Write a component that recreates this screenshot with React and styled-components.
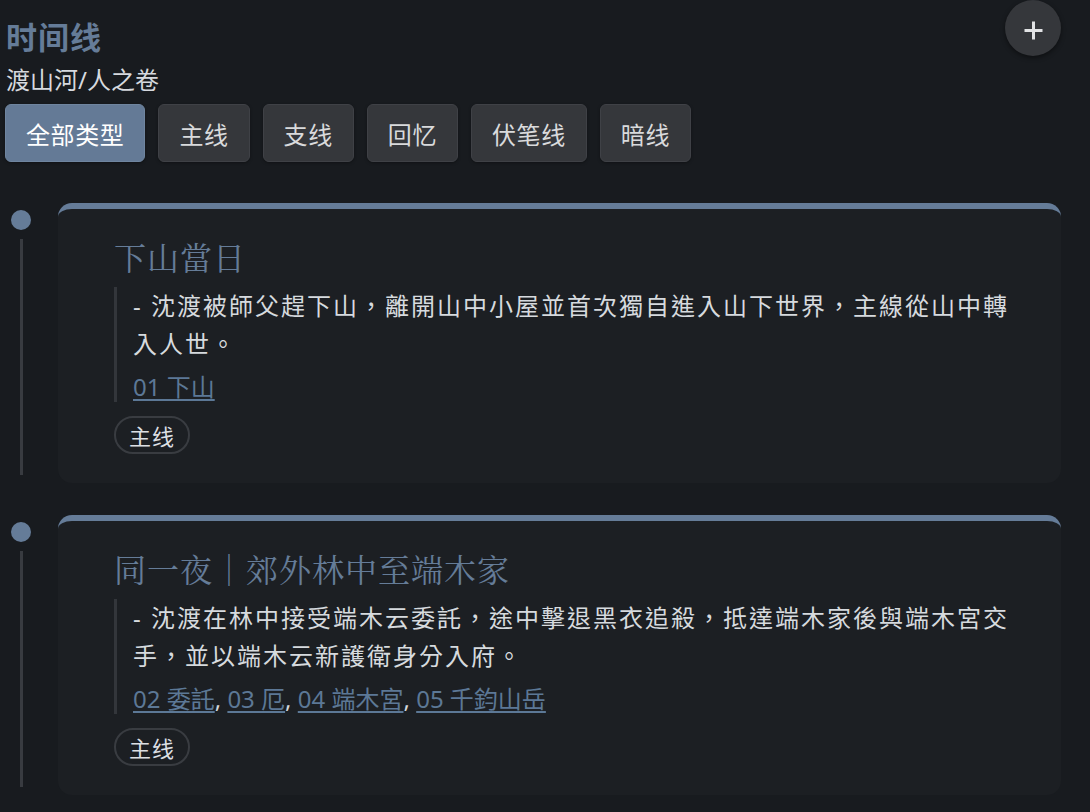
import React from "react";
import styled, { createGlobalStyle } from "styled-components";

const GlobalStyle = createGlobalStyle`
  html, body {
    margin: 0;
    padding: 0;
    background: #181b1f;
  }
  body {
    font-family: "Noto Sans", "Noto Sans CJK SC", sans-serif;
    color: #d3d7dc;
  }
  * { box-sizing: border-box; }
`;

const Page = styled.div`
  padding: 0 29px 0 5px;
  min-height: 812px;
`;

const Header = styled.header`
  display: flex;
  justify-content: space-between;
  align-items: flex-start;
`;

const TitleBlock = styled.div`
  display: flex;
  flex-direction: column;
  padding-left: 1px;
`;

const Title = styled.h1`
  margin: 16px 0 0;
  font-size: 31px;
  line-height: 40px;
  font-weight: 700;
  letter-spacing: 1px;
  color: #657c98;
  font-family: "Noto Sans CJK SC", sans-serif;
`;

const Subtitle = styled.div`
  margin-top: 8px;
  font-size: 24px;
  line-height: 32px;
  color: #d6d9de;
  font-family: "Noto Sans", "Noto Sans CJK SC", sans-serif;
`;

const FabButton = styled.button`
  width: 56px;
  height: 56px;
  border-radius: 50%;
  border: none;
  background: #35373b;
  box-shadow: 0 2px 5px rgba(0, 0, 0, 0.45);
  display: flex;
  align-items: center;
  justify-content: center;
  padding: 4px 0 0;
  cursor: pointer;
`;

const FilterRow = styled.div`
  display: flex;
  gap: 13px;
  margin-top: 8px;
`;

const FilterButton = styled.button`
  height: 58px;
  padding: 0 20px;
  border-radius: 6px;
  border: 1px solid ${(p) => (p.$active ? "#6f859f" : "#3f4146")};
  background: ${(p) => (p.$active ? "#647a96" : "#35373b")};
  color: ${(p) => (p.$active ? "#ffffff" : "#d9dadc")};
  font-family: "Noto Sans CJK SC", sans-serif;
  font-size: 24px;
  letter-spacing: 0.6px;
  box-shadow: 0 1px 3px rgba(0, 0, 0, 0.35);
  cursor: pointer;
`;

const Timeline = styled.div`
  margin-top: 41px;
  display: flex;
  flex-direction: column;
`;

const Item = styled.div`
  display: flex;
  gap: 21px;
  padding-bottom: 32px;
`;

const Rail = styled.div`
  width: 32px;
  flex: none;
  display: flex;
  flex-direction: column;
  align-items: center;
`;

const Dot = styled.div`
  width: 20px;
  height: 20px;
  border-radius: 50%;
  background: #657c98;
  margin-top: 7px;
  flex: none;
`;

const RailLine = styled.div`
  width: 3px;
  flex: 1;
  margin-top: 9px;
  margin-bottom: 8px;
  background: #383b40;
`;

const Card = styled.article`
  flex: 1;
  background: #1c1f23;
  border-top: 6px solid #657c98;
  border-radius: 14px;
  padding: 25px 44px 29px 56px;
  font-family: "Noto Sans", "Noto Sans CJK TC", sans-serif;
`;

const CardTitle = styled.h2`
  margin: 0;
  font-family: "Noto Serif CJK TC", "Noto Serif CJK SC", "Liberation Serif", serif;
  font-weight: 400;
  font-size: 32px;
  line-height: 44px;
  letter-spacing: 1px;
  color: #657c98;
`;

const Quote = styled.blockquote`
  margin: 9px 0 0;
  border-left: 3px solid #33363b;
  padding-left: 16px;
`;

const Summary = styled.p`
  margin: 0;
  font-size: 24px;
  line-height: 38px;
  letter-spacing: 2px;
  font-weight: 400;
  color: #d6dade;
`;

const Links = styled.div`
  margin-top: 9px;
  font-size: 24px;
  line-height: 30px;
  color: #d3d7dc;
`;

const ChapterLink = styled.a`
  color: #5c7896;
  text-decoration: underline;
  text-underline-offset: 3px;
  text-decoration-thickness: 1.5px;
`;

const TagRow = styled.div`
  margin-top: 14px;
  display: flex;
`;

const Tag = styled.span`
  display: inline-block;
  border: 2px solid #393c41;
  border-radius: 19px;
  padding: 0 13px;
  font-size: 22px;
  line-height: 34px;
  letter-spacing: 1px;
  color: #dcdfe3;
  font-family: "Noto Sans CJK SC", sans-serif;
`;

const filters = ["全部类型", "主线", "支线", "回忆", "伏笔线", "暗线"];

const events = [
  {
    title: "下山當日",
    text: "- 沈渡被師父趕下山，離開山中小屋並首次獨自進入山下世界，主線從山中轉入人世。",
    links: ["01 下山"],
    tag: "主线",
  },
  {
    title: "同一夜｜郊外林中至端木家",
    text: "- 沈渡在林中接受端木云委託，途中擊退黑衣追殺，抵達端木家後與端木宮交手，並以端木云新護衛身分入府。",
    links: ["02 委託", "03 厄", "04 端木宮", "05 千鈞山岳"],
    tag: "主线",
  },
];

const PlusIcon = () => (
  <svg width="21" height="21" viewBox="0 0 21 21">
    <path d="M10.5 1.5v18M1.5 10.5h18" stroke="#e2e3e5" strokeWidth="3" fill="none" />
  </svg>
);

export default function App() {
  return (
    <>
      <GlobalStyle />
      <Page>
        <Header>
          <TitleBlock>
            <Title>时间线</Title>
            <Subtitle>渡山河/人之卷</Subtitle>
          </TitleBlock>
          <FabButton aria-label="add">
            <PlusIcon />
          </FabButton>
        </Header>
        <FilterRow>
          {filters.map((f, i) => (
            <FilterButton key={f} $active={i === 0}>
              {f}
            </FilterButton>
          ))}
        </FilterRow>
        <Timeline>
          {events.map((e) => (
            <Item key={e.title}>
              <Rail>
                <Dot />
                <RailLine />
              </Rail>
              <Card>
                <CardTitle>{e.title}</CardTitle>
                <Quote>
                  <Summary>{e.text}</Summary>
                  <Links>
                    {e.links.map((l, i) => (
                      <React.Fragment key={l}>
                        {i > 0 && ", "}
                        <ChapterLink href="#">{l}</ChapterLink>
                      </React.Fragment>
                    ))}
                  </Links>
                </Quote>
                <TagRow>
                  <Tag>{e.tag}</Tag>
                </TagRow>
              </Card>
            </Item>
          ))}
        </Timeline>
      </Page>
    </>
  );
}
